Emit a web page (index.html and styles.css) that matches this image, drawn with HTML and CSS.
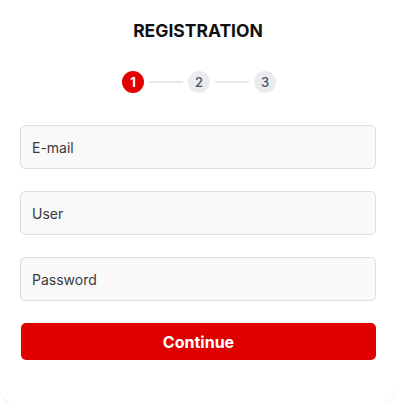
FILE: index.html
```html
<!DOCTYPE html>
<html>
<head>
<meta charset="utf-8">
<link rel="stylesheet" href="styles.css">
</head>
<body>
<div class="card">
  <h1 class="title">REGISTRATION</h1>
  <div class="steps">
    <span class="step active">1</span>
    <span class="line"></span>
    <span class="step">2</span>
    <span class="line"></span>
    <span class="step">3</span>
  </div>
  <form class="form">
    <input class="field" type="text" placeholder="E-mail">
    <input class="field" type="text" placeholder="User">
    <input class="field" type="password" placeholder="Password">
    <button class="btn" type="button">Continue</button>
  </form>
</div>
</body>
</html>
```
FILE: styles.css
```css
html, body {
  margin: 0;
  padding: 0;
  background: #ffffff;
}
body {
  font-family: Inter, "Noto Sans", sans-serif;
}
.card {
  width: 396px;
  height: 403px;
  box-sizing: border-box;
  padding: 20px 20px 0 20px;
  background: #fff;
  border-radius: 0 0 16px 16px;
  box-shadow: 0 3px 3px -1px rgba(0,0,0,0.05);
}
.title {
  margin: 0;
  font-size: 17.5px;
  font-weight: 700;
  line-height: 22px;
  text-align: center;
  color: #111;
}
.steps {
  display: flex;
  align-items: center;
  justify-content: center;
  gap: 5px;
  margin-top: 29px;
  padding-left: 2px;
}
.step {
  width: 22px;
  height: 22px;
  border-radius: 50%;
  background: #e9ebee;
  color: #4b5563;
  font-size: 13px;
  font-weight: 500;
  display: flex;
  align-items: center;
  justify-content: center;
}
.step.active {
  background: #e00000;
  color: #fff;
  font-weight: 700;
}
.line {
  width: 34px;
  height: 2px;
  background: #e5e7eb;
}
.form {
  margin-top: 32px;
  display: flex;
  flex-direction: column;
  gap: 22px;
}
.field {
  width: 356px;
  height: 44px;
  box-sizing: border-box;
  border: 1px solid #dedede;
  border-radius: 5px;
  background: #f9f9f9;
  padding: 0 11px;
  font-family: Inter, "Noto Sans", sans-serif;
  font-size: 14px;
  color: #333;
  outline: none;
}
.field::placeholder {
  color: #3a3a3a;
}
.btn {
  width: 355px;
  height: 37px;
  margin-left: 1px;
  border: none;
  border-radius: 5px;
  background: #e00000;
  color: #fff;
  font-family: Inter, "Noto Sans", sans-serif;
  font-size: 16px;
  font-weight: 700;
}
```
